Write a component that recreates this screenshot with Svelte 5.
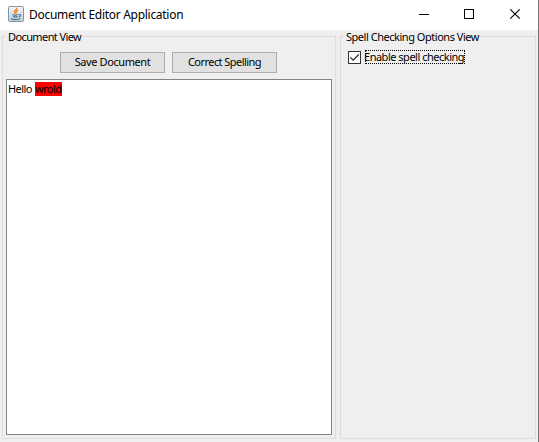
<script>
  let enabled = $state(true);
</script>

<div class="window">
  <header>
    <svg class="logo" width="16" height="16" viewBox="0 0 16 16">
      <defs>
        <linearGradient id="tile" x1="0" y1="0" x2="0" y2="1">
          <stop offset="0" stop-color="#f4f6f8" />
          <stop offset="1" stop-color="#c3ced8" />
        </linearGradient>
      </defs>
      <rect x=".5" y=".5" width="15" height="15" rx="1" fill="url(#tile)" stroke="#8296a8" />
      <path d="M8.8 1.8C9.3 4 5.2 4.5 6.3 6.3L7.5 8M10 4.1C7.8 5.2 7.5 5.8 8.5 7.3" fill="none" stroke="#ef7d22" stroke-width="1.2" />
      <path d="M4.2 8.6C5.5 9.3 8.8 9.3 10.3 8.6M5 10.6C6.4 11.2 8.5 11.2 9.9 10.6M10.8 8.6C13.7 8 12.8 10.6 10.9 11M3 12.7C5.2 14 10.5 13.8 12.3 12.5" fill="none" stroke="#4d7596" stroke-width="1.1" />
    </svg>
    <h1><span>Document Editor Application</span></h1>
    <svg class="controls" width="138" height="30" viewBox="0 0 138 30" fill="none" stroke="#000">
      <path d="M19 14.5h10M64.5 9.5h9v9h-9z" shape-rendering="crispEdges" />
      <path d="M110.3 9.3l9.4 9.4M119.7 9.3l-9.4 9.4" stroke-width="1.1" />
    </svg>
  </header>
  <main>
    <section class="document">
      <h2 class="doc-title">Document View</h2>
      <div class="buttons">
        <button class="save">Save Document</button>
        <button class="correct">Correct Spelling</button>
      </div>
      <div class="editor"><span class="hello">Hello</span><mark>wrold</mark></div>
    </section>
    <section class="options">
      <h2 class="opt-title">Spell Checking Options View</h2>
      <label>
        <input type="checkbox" bind:checked={enabled} />
        <span class="box">
          {#if enabled}
            <svg width="11" height="11" viewBox="0 0 11 11"><path d="M1.3 5.3L4.2 8.2L9.8 2.3" fill="none" stroke="#222" stroke-width="1.2" /></svg>
          {/if}
        </span>
        <span class="caption">Enable spell checking</span>
      </label>
    </section>
  </main>
</div>

<style>
  :global(body) { margin: 0; }
  .window {
    box-sizing: border-box;
    width: 539px;
    height: 442px;
    display: flex;
    flex-direction: column;
    background: #efefef;
    border-right: 1px solid #757575;
    font: 11px/14px "Noto Sans", sans-serif;
    color: #000;
    overflow: hidden;
    white-space: nowrap;
  }
  header {
    flex: none;
    height: 30px;
    display: flex;
    align-items: flex-start;
    background: #fff;
  }
  .logo { margin: 6px 5px 0 8px; flex: none; }
  h1 {
    margin: 7px 0 0;
    width: 372px;
    font: 12px/16px "Noto Sans", sans-serif;
    letter-spacing: -.29px;
  }
  .controls { flex: none; margin-left: -1px; }
  main { display: flex; flex: 1; padding: 6px 2px 3px; gap: 4px; }
  section {
    box-sizing: border-box;
    border: 1px solid #dcdcdc;
    display: flex;
    flex-direction: column;
    align-items: flex-start;
  }
  .document { width: 334px; padding: 0 3px 3px; }
  .options { width: 196px; padding: 0 7px; }
  h2 {
    margin: -7px 0 0 0;
    height: 14px;
    font: inherit;
    background: #efefef;
    padding: 0 2px;
  }
  .doc-title { letter-spacing: -.6px; }
  .opt-title { margin-left: -4px; letter-spacing: -.47px; }
  .buttons { display: flex; gap: 7px; margin: 8px 0 6px 54px; }
  button {
    box-sizing: border-box;
    width: 105px;
    height: 21px;
    border: 1px solid #adadad;
    padding: 0 0 2px;
    background: #e1e1e1;
    font: inherit;
    color: inherit;
  }
  .save { letter-spacing: -.4px; }
  .correct { letter-spacing: -.55px; }
  .editor {
    box-sizing: border-box;
    width: 326px;
    flex: 1;
    border: 1px solid #7f838a;
    background: #fff;
    padding: 2px 1px;
    display: flex;
    align-items: flex-start;
    letter-spacing: -.55px;
  }
  .hello { width: 27px; }
  mark { width: 27px; height: 14px; background: #f00; color: #000; }
  label { display: flex; align-items: flex-start; margin-top: 6px; }
  input { appearance: none; width: 0; height: 0; margin: 0; }
  .box {
    box-sizing: border-box;
    width: 13px;
    height: 13px;
    margin-top: 1px;
    border: 1px solid #333;
    background: #fff;
  }
  .box svg { display: block; }
  .caption {
    box-sizing: border-box;
    width: 100px;
    height: 14px;
    margin-left: 4px;
    outline: 1px dotted #000;
    outline-offset: -1px;
    letter-spacing: -.49px;
    text-indent: -1px;
  }
</style>
